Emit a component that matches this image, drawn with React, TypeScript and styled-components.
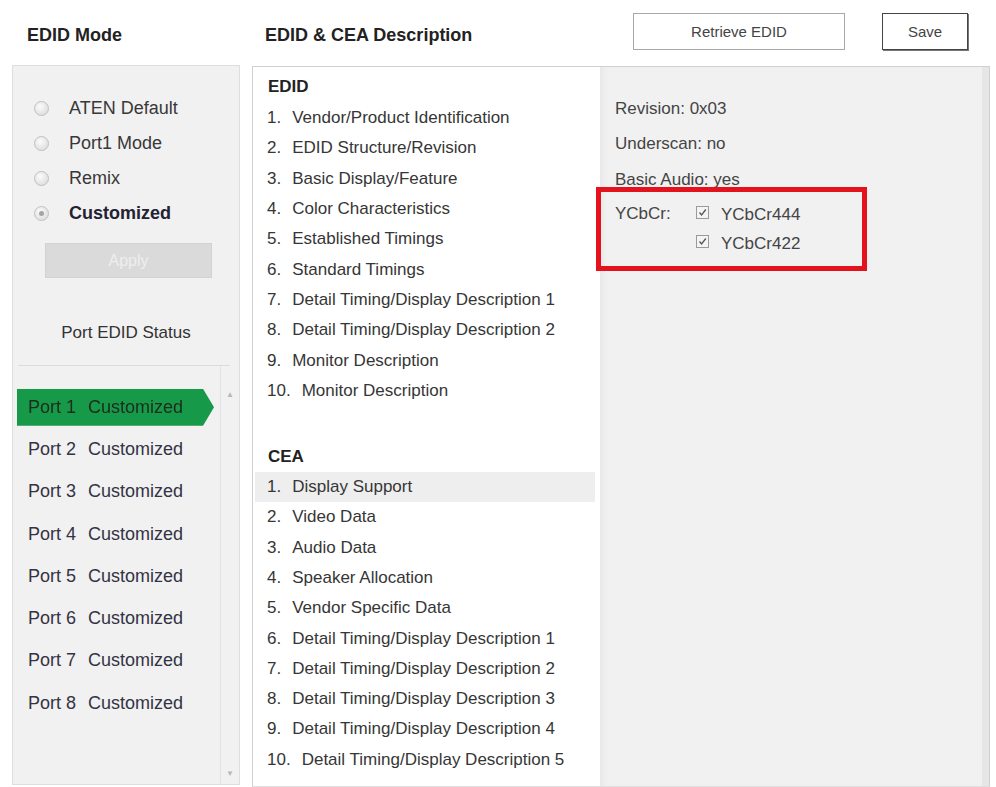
import React from 'react';
import styled, { createGlobalStyle } from 'styled-components';

// == data =========================================================================================
const MODES = [
  { label: 'ATEN Default', checked: false },
  { label: 'Port1 Mode', checked: false },
  { label: 'Remix', checked: false },
  { label: 'Customized', checked: true },
];

const PORTS = [ 1, 2, 3, 4, 5, 6, 7, 8 ];

const EDID_ITEMS = [
  'Vendor/Product Identification',
  'EDID Structure/Revision',
  'Basic Display/Feature',
  'Color Characteristics',
  'Established Timings',
  'Standard Timings',
  'Detail Timing/Display Description 1',
  'Detail Timing/Display Description 2',
  'Monitor Description',
  'Monitor Description',
];

const CEA_ITEMS = [
  'Display Support',
  'Video Data',
  'Audio Data',
  'Speaker Allocation',
  'Vendor Specific Data',
  'Detail Timing/Display Description 1',
  'Detail Timing/Display Description 2',
  'Detail Timing/Display Description 3',
  'Detail Timing/Display Description 4',
  'Detail Timing/Display Description 5',
];

// == styles =======================================================================================
const GlobalStyle = createGlobalStyle`
  html, body {
    margin: 0;
    padding: 0;
    background: #ffffff;
  }
  body {
    font-family: "Liberation Sans", Arial, sans-serif;
    color: #333333;
  }
`;

const Page = styled.div`
  width: 996px;
  height: 787px;
  box-sizing: border-box;
  padding-left: 12px;
  display: flex;
  flex-direction: column;
  overflow: hidden;
`;

const Header = styled.div`
  height: 65px;
  display: flex;
  align-items: flex-start;
`;

const Title = styled.div<{ $width?: number; $indent: number }>`
  ${ ( p ) => p.$width ? `width: ${ p.$width }px;` : '' }
  padding-top: 24px;
  padding-left: ${ ( p ) => p.$indent }px;
  box-sizing: border-box;
  font-size: 18px;
  line-height: 22px;
  font-weight: bold;
  color: #222222;
`;

const HeaderButtons = styled.div`
  margin-left: auto;
  margin-right: 28px;
  margin-top: 13px;
  display: flex;
  gap: 37px;
`;

const Button = styled.button<{ $width: number; $strong?: boolean }>`
  width: ${ ( p ) => p.$width }px;
  height: 37px;
  background: #ffffff;
  border: 1px solid ${ ( p ) => p.$strong ? '#444444' : '#a8a8a8' };
  box-shadow: ${ ( p ) => p.$strong ? '1px 1px 0 #777777' : 'none' };
  font-family: inherit;
  font-size: 15px;
  color: #444444;
  padding: 0;
`;

const Body = styled.div`
  flex: 1;
  display: flex;
  gap: 12px;
`;

// -- left column ----------------------------------------------------------------------------------
const ModePanel = styled.div`
  width: 228px;
  height: 720px;
  box-sizing: border-box;
  background: #f1f1f1;
  border: 1px solid #dedede;
  display: flex;
  flex-direction: column;
`;

const RadioGroup = styled.div`
  padding: 25px 0 0 21px;
  display: flex;
  flex-direction: column;
`;

const RadioRow = styled.label<{ $active: boolean }>`
  height: 35px;
  display: flex;
  align-items: center;
  gap: 20px;
  font-size: 18px;
  font-weight: ${ ( p ) => p.$active ? 'bold' : 'normal' };
  color: ${ ( p ) => p.$active ? '#222233' : '#383838' };
`;

const RadioDot = styled.span<{ $checked: boolean }>`
  width: 13px;
  height: 13px;
  border-radius: 50%;
  border: 1px solid #c0c0c0;
  background: radial-gradient( circle at 40% 35%, #fbfbfb 0%, #d6d6d6 100% );
  display: flex;
  align-items: center;
  justify-content: center;
  &::after {
    content: '';
    width: 5px;
    height: 5px;
    border-radius: 50%;
    background: ${ ( p ) => p.$checked ? '#a4a4a4' : 'transparent' };
  }
`;

const ApplyButton = styled.div`
  margin: 12px 0 0 32px;
  width: 165px;
  height: 33px;
  background: #dadada;
  border: 1px solid #d2d2d2;
  display: flex;
  align-items: center;
  justify-content: center;
  font-size: 16px;
  color: #eeeeee;
`;

const StatusLabel = styled.div`
  margin-top: 43px;
  height: 24px;
  line-height: 24px;
  text-align: center;
  font-size: 17px;
  color: #333333;
`;

const Divider = styled.div`
  margin: 20px 9px 0 5px;
  border-top: 1px solid #dcdcdc;
`;

const PortArea = styled.div`
  flex: 1;
  display: flex;
  padding-left: 4px;
`;

const PortList = styled.div`
  flex: 1;
  padding-top: 20px;
  display: flex;
  flex-direction: column;
`;

const PortRow = styled.div`
  height: 42.3px;
  display: flex;
  align-items: center;
`;

const PortItem = styled.div<{ $selected: boolean }>`
  width: 197px;
  height: 37px;
  box-sizing: border-box;
  padding-left: 11px;
  display: flex;
  align-items: center;
  gap: 12px;
  font-size: 18px;
  color: ${ ( p ) => p.$selected ? '#1c2c1c' : '#333344' };
  background: ${ ( p ) => p.$selected ? '#17994a' : 'transparent' };
  clip-path: polygon( 0 0, 186px 0, 100% 50%, 186px 100%, 0 100% );
  filter: ${ ( p ) => p.$selected ? 'drop-shadow( 0 0 1px #9be6b2 )' : 'none' };
`;

const ScrollTrack = styled.div`
  width: 18px;
  border-left: 1px solid #e2e2e2;
  display: flex;
  flex-direction: column;
  justify-content: space-between;
  align-items: center;
  padding: 24px 0 6px;
  font-size: 8px;
  color: #b8b8b8;
`;

// -- description panel ----------------------------------------------------------------------------
const DescPanel = styled.div`
  width: 738px;
  height: 721px;
  margin-top: 1px;
  box-sizing: border-box;
  border: 1px solid #d0d0d0;
  border-bottom-color: #e0e0e0;
  display: flex;
`;

const DescList = styled.div`
  width: 347px;
  background: #ffffff;
  padding-top: 8px;
  display: flex;
  flex-direction: column;
`;

const SectionTitle = styled.div<{ $gap: number }>`
  margin-top: ${ ( p ) => p.$gap }px;
  padding-left: 15px;
  height: 24px;
  line-height: 24px;
  font-size: 17px;
  font-weight: bold;
  color: #222222;
`;

const ItemList = styled.ol<{ $gap: number }>`
  list-style: none;
  margin: ${ ( p ) => p.$gap }px 0 0;
  padding: 0;
`;

const Item = styled.li<{ $active?: boolean }>`
  height: 30.3px;
  margin: 0 5px 0 2px;
  padding-left: 12px;
  display: flex;
  align-items: center;
  font-size: 17px;
  color: #363636;
  background: ${ ( p ) => p.$active ? '#eeeeee' : 'transparent' };
`;

const ItemNo = styled.span`
  margin-right: 11px;
`;

const Detail = styled.div`
  flex: 1;
  position: relative;
  background: #f1f1f1;
  border-right: 7px solid #e6e6e6;
  padding: 24px 0 0 15px;
  box-shadow: inset 6px 0 6px -4px #e4e4e4;
`;

const DetailRow = styled.div`
  height: 35.5px;
  display: flex;
  align-items: center;
  font-size: 17px;
  color: #444444;
`;

const YcbcrRow = styled.div`
  display: flex;
  font-size: 17px;
  color: #444444;
  padding-top: 6px;
`;

const YcbcrLabel = styled.span`
  width: 81px;
  line-height: 20px;
`;

const CheckList = styled.div`
  display: flex;
  flex-direction: column;
  gap: 8px;
`;

const CheckRow = styled.label`
  display: flex;
  align-items: center;
  gap: 12px;
  line-height: 21px;
`;

const CheckBox = styled.span`
  width: 11px;
  height: 11px;
  border: 1px solid #9a9a9a;
  background: #f4f4f4;
  display: flex;
  align-items: center;
  justify-content: center;
  margin-top: -3px;
`;

const Highlight = styled.div`
  position: absolute;
  left: -4px;
  top: 120px;
  width: 271px;
  height: 84px;
  box-sizing: border-box;
  border: 5px solid #e3121c;
  pointer-events: none;
`;

// == components ===================================================================================
const Check = (): JSX.Element => <CheckBox>
  <svg width="9" height="9" viewBox="0 0 9 9">
    <path d="M1.5 4.5 L3.6 7 L7.8 1.5" fill="none" stroke="#555" strokeWidth="1.3" />
  </svg>
</CheckBox>;

const App = (): JSX.Element => {
  return <>
    <GlobalStyle />
    <Page>
      <Header>
        <Title $width={ 240 } $indent={ 15 }>EDID Mode</Title>
        <Title $indent={ 13 }>EDID &amp; CEA Description</Title>
        <HeaderButtons>
          <Button $width={ 212 }>Retrieve EDID</Button>
          <Button $width={ 86 } $strong>Save</Button>
        </HeaderButtons>
      </Header>

      <Body>
        <ModePanel>
          <RadioGroup>
            { MODES.map( ( m ) => (
              <RadioRow key={ m.label } $active={ m.checked }>
                <RadioDot $checked={ m.checked } />
                { m.label }
              </RadioRow>
            ) ) }
          </RadioGroup>
          <ApplyButton>Apply</ApplyButton>
          <StatusLabel>Port EDID Status</StatusLabel>
          <Divider />
          <PortArea>
            <PortList>
              { PORTS.map( ( n ) => (
                <PortRow key={ n }>
                  <PortItem $selected={ n === 1 }>
                    <span>Port { n }</span>
                    <span>Customized</span>
                  </PortItem>
                </PortRow>
              ) ) }
            </PortList>
            <ScrollTrack>
              <span>▲</span>
              <span>▼</span>
            </ScrollTrack>
          </PortArea>
        </ModePanel>

        <DescPanel>
          <DescList>
            <SectionTitle $gap={ 0 }>EDID</SectionTitle>
            <ItemList $gap={ 4 }>
              { EDID_ITEMS.map( ( t, i ) => (
                <Item key={ i }>
                  <ItemNo>{ i + 1 }.</ItemNo>{ t }
                </Item>
              ) ) }
            </ItemList>
            <SectionTitle $gap={ 39 }>CEA</SectionTitle>
            <ItemList $gap={ 3 }>
              { CEA_ITEMS.map( ( t, i ) => (
                <Item key={ i } $active={ i === 0 }>
                  <ItemNo>{ i + 1 }.</ItemNo>{ t }
                </Item>
              ) ) }
            </ItemList>
          </DescList>

          <Detail>
            <DetailRow>Revision: 0x03</DetailRow>
            <DetailRow>Underscan: no</DetailRow>
            <DetailRow>Basic Audio: yes</DetailRow>
            <YcbcrRow>
              <YcbcrLabel>YCbCr:</YcbcrLabel>
              <CheckList>
                <CheckRow><Check />YCbCr444</CheckRow>
                <CheckRow><Check />YCbCr422</CheckRow>
              </CheckList>
            </YcbcrRow>
            <Highlight />
          </Detail>
        </DescPanel>
      </Body>
    </Page>
  </>;
};

export default App;
